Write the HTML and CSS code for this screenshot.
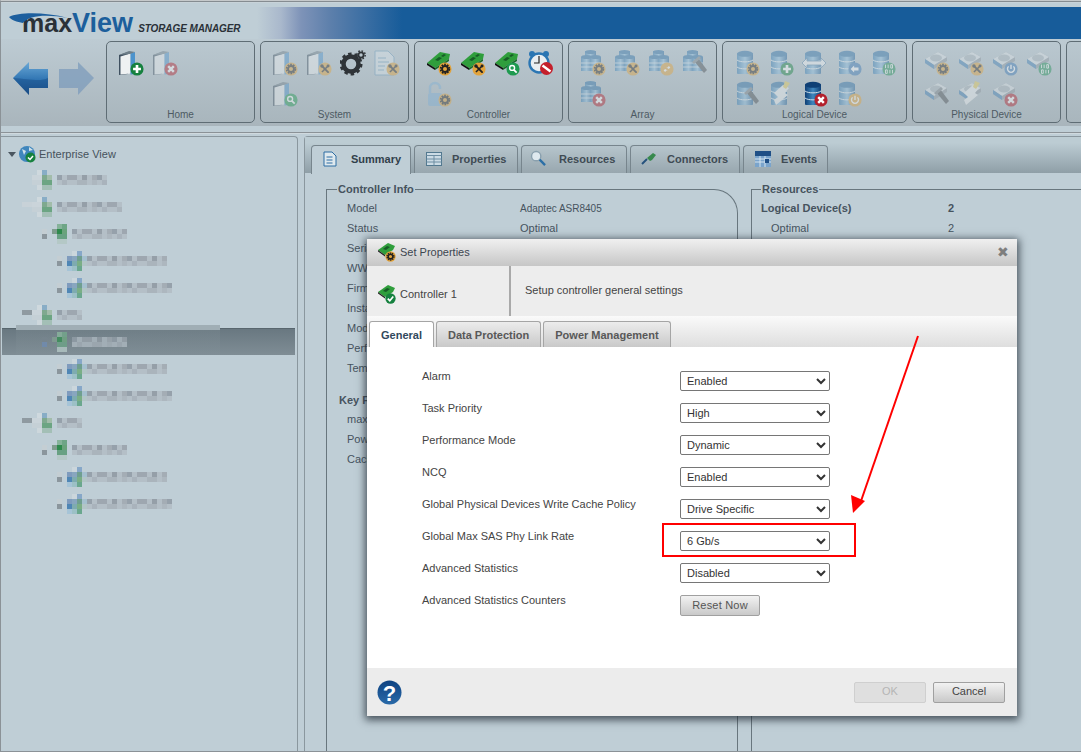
FILE: index.html
```html
<!DOCTYPE html>
<html lang="en">
<head>
<meta charset="utf-8">
<title>maxView Storage Manager</title>
<link rel="stylesheet" href="styles.css">
</head>
<body>
<svg class="defs" width="0" height="0" aria-hidden="true">
  <defs>
    <linearGradient id="gBlue" x1="0" y1="0" x2="0" y2="1"><stop offset="0" stop-color="#6aa8d6"/><stop offset=".55" stop-color="#2f74b2"/><stop offset="1" stop-color="#1b4f88"/></linearGradient>
    <linearGradient id="gDb" x1="0" y1="0" x2="1" y2="0"><stop offset="0" stop-color="#2f79b2"/><stop offset=".5" stop-color="#8ec0e2"/><stop offset="1" stop-color="#1d5f98"/></linearGradient>
    <linearGradient id="gDbDark" x1="0" y1="0" x2="1" y2="0"><stop offset="0" stop-color="#0e3f75"/><stop offset=".5" stop-color="#3f86bd"/><stop offset="1" stop-color="#0e3f75"/></linearGradient>
    <linearGradient id="gHelp" x1="0" y1="0" x2="0" y2="1"><stop offset="0" stop-color="#0f4382"/><stop offset="1" stop-color="#2a6aa8"/></linearGradient>
    <pattern id="mot" width="40" height="10" patternUnits="userSpaceOnUse">
      <rect width="40" height="10" fill="#b4bfc7"/>
      <rect width="5" height="5" fill="#96a1ab"/><rect x="10" width="10" height="5" fill="#9ea7b0"/><rect x="25" width="5" height="5" fill="#959fa8"/><rect x="35" width="5" height="5" fill="#a4adb5"/>
      <rect x="5" y="5" width="5" height="5" fill="#a9b3bc"/><rect x="20" y="5" width="10" height="5" fill="#aab4bc"/><rect x="35" y="5" width="5" height="5" fill="#adb7bf"/>
    </pattern>

    <symbol id="b-gear" viewBox="0 0 16 16"><circle cx="8" cy="8" r="7.500" fill="#e2a33b"/><circle cx="8" cy="8" r="5" fill="none" stroke="#222" stroke-width="2" stroke-dasharray="2 1.140"/><circle cx="8" cy="8" r="3.400" fill="none" stroke="#222" stroke-width="2.200"/></symbol>
    <symbol id="b-tool" viewBox="0 0 16 16"><circle cx="8" cy="8" r="7.500" fill="#e2a33b"/><path d="M5 5l6.500 6.500" stroke="#222" stroke-width="2.200" stroke-linecap="round"/><path d="M11.500 4.500l-7 7" stroke="#222" stroke-width="1.800"/><circle cx="4.500" cy="4.500" r="2" fill="#222"/><circle cx="11.500" cy="4.500" r="1.700" fill="#222"/></symbol>
    <symbol id="b-plus" viewBox="0 0 16 16"><circle cx="8" cy="8" r="7.500" fill="#16813f"/><path d="M8 3.500v9M3.500 8h9" stroke="#fff" stroke-width="3"/></symbol>
    <symbol id="b-x" viewBox="0 0 16 16"><circle cx="8" cy="8" r="7.500" fill="#b3202c"/><path d="M4.800 4.800l6.400 6.400M11.200 4.800l-6.400 6.400" stroke="#fff" stroke-width="2.800"/></symbol>
    <symbol id="b-find" viewBox="0 0 16 16"><circle cx="8" cy="8" r="7.500" fill="#1f9a50"/><circle cx="7" cy="6.800" r="2.800" fill="none" stroke="#fff" stroke-width="1.600"/><path d="M9 9l3.200 3.200" stroke="#fff" stroke-width="2"/></symbol>
    <symbol id="b-check" viewBox="0 0 16 16"><circle cx="8" cy="8" r="7.500" fill="#16813f"/><path d="M4 8.200l3 3 5-6" stroke="#fff" stroke-width="2.400" fill="none"/></symbol>
    <symbol id="b-link" viewBox="0 0 16 16"><circle cx="8" cy="8" r="7.500" fill="#e2a33b"/><path d="M5 10.500l1.600-1.600M9.400 7l1.600-1.600" stroke="#fff" stroke-width="2.400"/><path d="M6 8l2 2M8 6l2 2" stroke="#fff" stroke-width="1"/></symbol>
    <symbol id="b-back" viewBox="0 0 16 16"><circle cx="8" cy="8" r="7.500" fill="#3b78b5"/><path d="M3 8l4-4v2.400h5v3.200H7V12z" fill="#fff"/></symbol>
    <symbol id="b-bin" viewBox="0 0 16 16"><circle cx="8" cy="8" r="7.500" fill="#1f8f55"/><path d="M4 3v4M7 3v4M10 3h2v4h-2zM4 9h2v4H4zM9 9v4M12 9v4" stroke="#fff" stroke-width="1" fill="none"/></symbol>
    <symbol id="b-pow" viewBox="0 0 16 16"><circle cx="8" cy="8" r="7.500" fill="#3b78b5"/><path d="M5.200 5a4 4 0 1 0 5.600 0" fill="none" stroke="#fff" stroke-width="1.600"/><path d="M8 3v5" stroke="#fff" stroke-width="1.600"/></symbol>
    <symbol id="b-powo" viewBox="0 0 16 16"><circle cx="8" cy="8" r="7.500" fill="#e2a33b"/><path d="M5.200 5a4 4 0 1 0 5.600 0" fill="none" stroke="#fff" stroke-width="1.600"/><path d="M8 3v5" stroke="#fff" stroke-width="1.600"/></symbol>

    <symbol id="i-server" viewBox="0 0 26 26">
      <path d="M1 5l9-3v22l-9 1z" fill="#3f5060"/><path d="M2.500 6.500l10-3v20l-10 1z" fill="#eef1f2"/><path d="M12.500 3.500L17 2v22l-4.500 .5z" fill="#4c93cc"/><path d="M1 5l10-4 6 1-5 2z" fill="#6d7d88"/>
    </symbol>
    <symbol id="i-card" viewBox="0 0 26 26">
      <path d="M1 13L14 2l10 2-1 5L9 18z" fill="#2f9e3c"/><path d="M1 13l8 5v2l-8-5z" fill="#111"/><path d="M9 18L23 9v2L9 20z" fill="#1a6b2a"/><path d="M9 10l4-3 3 1-4 3zM15 6l3-2 2 1-3 2z" fill="#175c27"/>
    </symbol>
    <symbol id="i-hat" viewBox="0 0 20 20">
      <path d="M1 8l10-7 7 3-2 4-8 5z" fill="#2f9e3c"/><path d="M1 8l7 5v1.500L1 9.500z" fill="#222"/><path d="M6 7l4-3 3 1-4 3z" fill="#175c27"/>
    </symbol>
    <symbol id="i-db" viewBox="0 0 26 26">
      <rect x="3" y="3" width="16" height="21" rx="1" fill="url(#gDb)"/><ellipse cx="11" cy="3.800" rx="8" ry="3" fill="#2c6fa6"/><path d="M3 10c3 2.500 13 2.500 16 0M3 17c3 2.500 13 2.500 16 0" stroke="#eaf2f7" stroke-width="1" fill="none"/>
    </symbol>
    <symbol id="i-dbdark" viewBox="0 0 26 26">
      <rect x="3" y="3" width="16" height="21" rx="1" fill="url(#gDbDark)"/><ellipse cx="11" cy="3.800" rx="8" ry="3" fill="#0e3f75"/><path d="M3 10c3 2.500 13 2.500 16 0M3 17c3 2.500 13 2.500 16 0" stroke="#cfe0ec" stroke-width="1" fill="none"/>
    </symbol>
    <symbol id="i-arr" viewBox="0 0 26 26">
      <rect x="5" y="1" width="11" height="14" fill="url(#gDb)"/><rect x="1" y="7" width="11" height="14" fill="url(#gDb)"/><rect x="10" y="7" width="11" height="14" fill="url(#gDb)"/><ellipse cx="6.500" cy="7" rx="5.500" ry="2" fill="#2c6fa6"/><ellipse cx="15.500" cy="7" rx="5.500" ry="2" fill="#2c6fa6"/><ellipse cx="10.500" cy="2" rx="5.500" ry="2" fill="#2c6fa6"/><path d="M1 13h20M1 17h20" stroke="#eaf2f7" stroke-width=".8"/>
    </symbol>
    <symbol id="i-drive" viewBox="0 0 26 26">
      <path d="M1 9L14 2l9 5v4L10 19l-9-6z" fill="#8e98a0"/><path d="M1 9l9 6 13-8-9-5z" fill="#dfe5e8"/><ellipse cx="12" cy="8" rx="6" ry="3.400" fill="#a9b4bb"/><path d="M1 9v4l9 6v-4z" fill="#3f7fb5"/>
    </symbol>
    <symbol id="i-torch" viewBox="0 0 26 26"><path d="M12 11l4-3 9 12-3 3z" fill="#4a4f53"/><path d="M10 12l7-6 2 2-7 6z" fill="#7c8388"/></symbol>
    <symbol id="i-flash" viewBox="0 0 26 26"><path d="M6 12l9-8 6 3-4 5 3 2-12 10-2-5 4-3z" fill="#f3f5f6"/><path d="M17 0l5 2-4 6-3-2z" fill="#e9cf5b"/></symbol>
    <symbol id="i-wide" viewBox="0 0 26 26"><path d="M0 13l5-5v3h14V8l5 5-5 5v-3H5v3z" fill="#f3f6f8" stroke="#4d7ea6" stroke-width=".8"/></symbol>
    <symbol id="i-gears" viewBox="0 0 26 26">
      <circle cx="11" cy="14" r="7.500" fill="none" stroke="#2f3438" stroke-width="4.500"/><circle cx="11" cy="14" r="10" fill="none" stroke="#2f3438" stroke-width="3" stroke-dasharray="3.400 2.880"/>
      <circle cx="21" cy="5" r="2.600" fill="none" stroke="#2f3438" stroke-width="1.800"/><circle cx="21" cy="5" r="4.200" fill="none" stroke="#2f3438" stroke-width="1.400" stroke-dasharray="1.600 1.700"/>
    </symbol>
    <symbol id="i-doc" viewBox="0 0 26 26">
      <path d="M1 1h13l6 6v18H1z" fill="#dbe5ea" stroke="#6f9dbd"/><path d="M4 8h8M4 12h11M4 16h7M4 20h6" stroke="#6f9dbd"/>
    </symbol>
    <symbol id="i-clock" viewBox="0 0 26 26">
      <circle cx="4" cy="4" r="3" fill="#2b76b3"/><circle cx="18" cy="4" r="3" fill="#2b76b3"/><circle cx="11" cy="13" r="9.500" fill="#e9eef1" stroke="#2b76b3" stroke-width="2.400"/><path d="M11 6v7H6" stroke="#222" stroke-width="1.200" fill="none"/>
      <circle cx="18.500" cy="18.500" r="6.500" fill="#c41f2b"/><path d="M14.500 15.500l8 6" stroke="#fff" stroke-width="2.400"/>
    </symbol>
    <symbol id="i-lock" viewBox="0 0 26 26">
      <path d="M4 12V7a5 5 0 0 1 10 0v1" fill="none" stroke="#7fb0d6" stroke-width="2.400"/><rect x="2" y="12" width="14" height="13" rx="2" fill="#7fb0d6"/>
    </symbol>
    <symbol id="i-glass" viewBox="0 0 22 22">
      <circle cx="8" cy="8" r="6" fill="#dfe9ef" stroke="#8aa0ae" stroke-width="1.800"/><path d="M12.500 12.500l7 7" stroke="#2c6fa6" stroke-width="3"/>
    </symbol>

    <symbol id="m-node" viewBox="0 0 20 20">
      <rect x="5" y="0" width="5" height="5" fill="#cfd9de"/><rect x="10" y="0" width="5" height="5" fill="#88adc6"/>
      <rect y="5" width="10" height="5" fill="#cad4da"/><rect x="10" y="5" width="5" height="5" fill="#7fa98f"/><rect x="15" y="5" width="5" height="5" fill="#a2bcaa"/>
      <rect y="10" width="10" height="5" fill="#c5d0d6"/><rect x="10" y="10" width="10" height="5" fill="#6ca583"/>
      <rect x="5" y="15" width="5" height="5" fill="#cdd7dc"/><rect x="10" y="15" width="10" height="5" fill="#a3bfb6"/>
    </symbol>
    <symbol id="m-ctrl" viewBox="0 0 20 20">
      <rect x="5" y="0" width="5" height="5" fill="#86b39a"/><rect x="10" y="0" width="5" height="5" fill="#6ea586"/>
      <rect y="5" width="5" height="5" fill="#7f9c8e"/><rect x="5" y="5" width="5" height="5" fill="#2e8a4d"/><rect x="10" y="5" width="5" height="5" fill="#6aa37c"/>
      <rect x="5" y="10" width="10" height="5" fill="#68a183"/>
      <rect x="5" y="15" width="10" height="5" fill="#b4c8c6"/>
    </symbol>
    <symbol id="m-vol" viewBox="0 0 20 20">
      <rect x="5" y="0" width="5" height="5" fill="#cbd6dc"/><rect x="10" y="0" width="5" height="5" fill="#86a7c8"/>
      <rect y="5" width="5" height="5" fill="#7f9bbd"/><rect x="5" y="5" width="5" height="5" fill="#88a6bf"/><rect x="10" y="5" width="5" height="5" fill="#6f9e90"/><rect x="15" y="5" width="5" height="5" fill="#a5c0cf"/>
      <rect y="10" width="5" height="5" fill="#4f86b5"/><rect x="5" y="10" width="5" height="5" fill="#7eabb0"/><rect x="10" y="10" width="5" height="5" fill="#7aae86"/><rect x="15" y="10" width="5" height="5" fill="#b2c5c7"/>
      <rect y="15" width="5" height="5" fill="#a6c4d7"/><rect x="5" y="15" width="5" height="5" fill="#9cc0c6"/><rect x="10" y="15" width="5" height="5" fill="#6aa78e"/>
    </symbol>
    <symbol id="m-exp" viewBox="0 0 5 10"><rect y="0" width="5" height="5" fill="#c4ced3"/><rect y="5" width="5" height="5" fill="#8b969d"/></symbol>
    <symbol id="m-exps" viewBox="0 0 5 10"><rect y="0" width="5" height="5" fill="#72808a"/><rect y="5" width="5" height="5" fill="#6b88b0"/></symbol>
  </defs>
</svg>

<div class="app">
  <header class="masthead">
    <div class="logo">
      <svg class="swoosh" width="60" height="12" viewBox="0 0 60 12"><path d="M0 4C10 -1 36 -1 59 5 38 1 20 2 14 10 8 9 2 7 0 4z" fill="#1d5f9e"/></svg>
      <span class="logo-max">max</span><span class="logo-view">View</span>
      <span class="logo-sub">STORAGE MANAGER</span>
    </div>
    <div class="bluebar"></div>
  </header>

  <nav class="toolbar">
    <div class="nav-arrows">
      <svg width="37" height="35" viewBox="0 0 37 35"><path d="M1 17L17 1v7h19v19H17v7z" fill="url(#gBlue)"/><path d="M17 34v-7h19V17c-8 4-18 1-35 0z" fill="#174a82" opacity=".45"/></svg>
      <svg class="dim" width="37" height="35" viewBox="0 0 37 35"><path d="M36 17L20 1v7H1v19h19v7z" fill="#7d9cbc"/></svg>
    </div>

    <section class="group g-w149">
      <div class="icons">
        <div class="ic"><svg><use href="#i-server"/></svg><svg class="bd"><use href="#b-plus"/></svg></div>
        <div class="ic off"><svg><use href="#i-server"/></svg><svg class="bd"><use href="#b-x"/></svg></div>
      </div>
      <div class="gname">Home</div>
    </section>

    <section class="group g-w149">
      <div class="icons">
        <div class="ic off"><svg><use href="#i-server"/></svg><svg class="bd"><use href="#b-gear"/></svg></div>
        <div class="ic off"><svg><use href="#i-server"/></svg><svg class="bd"><use href="#b-tool"/></svg></div>
        <div class="ic"><svg><use href="#i-gears"/></svg></div>
        <div class="ic off"><svg><use href="#i-doc"/></svg><svg class="bd"><use href="#b-tool"/></svg></div>
        <div class="ic off"><svg><use href="#i-server"/></svg><svg class="bd"><use href="#b-find"/></svg></div>
      </div>
      <div class="gname">System</div>
    </section>

    <section class="group g-w149">
      <div class="icons">
        <div class="ic"><svg><use href="#i-card"/></svg><svg class="bd"><use href="#b-gear"/></svg></div>
        <div class="ic"><svg><use href="#i-card"/></svg><svg class="bd"><use href="#b-tool"/></svg></div>
        <div class="ic"><svg><use href="#i-card"/></svg><svg class="bd"><use href="#b-find"/></svg></div>
        <div class="ic"><svg><use href="#i-clock"/></svg></div>
        <div class="ic off"><svg><use href="#i-lock"/></svg><svg class="bd"><use href="#b-gear"/></svg></div>
      </div>
      <div class="gname">Controller</div>
    </section>

    <section class="group g-w149">
      <div class="icons">
        <div class="ic off"><svg><use href="#i-arr"/></svg><svg class="bd"><use href="#b-gear"/></svg></div>
        <div class="ic off"><svg><use href="#i-arr"/></svg><svg class="bd"><use href="#b-tool"/></svg></div>
        <div class="ic off"><svg><use href="#i-arr"/></svg><svg class="bd"><use href="#b-link"/></svg></div>
        <div class="ic off"><svg><use href="#i-arr"/></svg><svg class="full"><use href="#i-torch"/></svg></div>
        <div class="ic off"><svg><use href="#i-arr"/></svg><svg class="bd"><use href="#b-x"/></svg></div>
      </div>
      <div class="gname">Array</div>
    </section>

    <section class="group g-w185">
      <div class="icons">
        <div class="ic off"><svg><use href="#i-db"/></svg><svg class="bd"><use href="#b-gear"/></svg></div>
        <div class="ic off"><svg><use href="#i-db"/></svg><svg class="bd"><use href="#b-plus"/></svg></div>
        <div class="ic off"><svg><use href="#i-db"/></svg><svg class="full"><use href="#i-wide"/></svg></div>
        <div class="ic off"><svg><use href="#i-db"/></svg><svg class="bd"><use href="#b-back"/></svg></div>
        <div class="ic off"><svg><use href="#i-db"/></svg><svg class="bd"><use href="#b-bin"/></svg></div>
        <div class="ic off"><svg><use href="#i-db"/></svg><svg class="full"><use href="#i-torch"/></svg></div>
        <div class="ic off"><svg><use href="#i-db"/></svg><svg class="full"><use href="#i-flash"/></svg></div>
        <div class="ic"><svg><use href="#i-dbdark"/></svg><svg class="bd"><use href="#b-x"/></svg></div>
        <div class="ic off"><svg><use href="#i-db"/></svg><svg class="bd"><use href="#b-powo"/></svg></div>
      </div>
      <div class="gname">Logical Device</div>
    </section>

    <section class="group g-w149">
      <div class="icons">
        <div class="ic off"><svg><use href="#i-drive"/></svg><svg class="bd"><use href="#b-gear"/></svg></div>
        <div class="ic off"><svg><use href="#i-drive"/></svg><svg class="bd"><use href="#b-tool"/></svg></div>
        <div class="ic off"><svg><use href="#i-drive"/></svg><svg class="bd"><use href="#b-pow"/></svg></div>
        <div class="ic off"><svg><use href="#i-drive"/></svg><svg class="bd"><use href="#b-bin"/></svg></div>
        <div class="ic off"><svg><use href="#i-drive"/></svg><svg class="full"><use href="#i-torch"/></svg></div>
        <div class="ic off"><svg><use href="#i-drive"/></svg><svg class="full"><use href="#i-flash"/></svg></div>
        <div class="ic off"><svg><use href="#i-drive"/></svg><svg class="bd"><use href="#b-x"/></svg></div>
      </div>
      <div class="gname">Physical Device</div>
    </section>

    <section class="group g-rest"></section>
  </nav>

  <main class="workspace">
    <aside class="tree">
      <div class="root">
        <span class="caret"></span>
        <svg class="globe" width="17" height="17" viewBox="0 0 17 17"><circle cx="8" cy="8" r="8" fill="#3f86bd"/><path d="M3 3l4 2-2 4zM10 1l4 3-4 1z" fill="#cfe1ea"/><circle cx="11.500" cy="11.500" r="5" fill="#16813f"/><path d="M9 11.500l2 2 3-3.500" stroke="#fff" stroke-width="1.500" fill="none"/></svg>
        <span>Enterprise View</span>
      </div>
      <div class="trow l1"><svg class="mi" width="20" height="20"><use href="#m-node"/></svg><svg class="mt" width="50" height="10"><rect width="50" height="10" fill="url(#mot)"/></svg></div>
      <div class="trow l0"><svg class="mi" width="30" height="20" viewBox="0 0 30 20"><rect y="5" width="10" height="5" fill="#c8d2d8"/><use href="#m-node" x="10" width="20" height="20"/></svg><svg class="mt" width="65" height="10"><rect width="65" height="10" fill="url(#mot)"/></svg></div>
      <div class="trow l2"><svg class="me" width="5" height="10"><use href="#m-exp"/></svg><svg class="mi" width="20" height="20"><use href="#m-ctrl"/></svg><svg class="mt" width="55" height="10"><rect width="55" height="10" fill="url(#mot)"/></svg></div>
      <div class="trow l3"><svg class="me" width="5" height="10"><use href="#m-exp"/></svg><svg class="mi" width="20" height="20"><use href="#m-vol"/></svg><svg class="mt" width="80" height="10"><rect width="80" height="10" fill="url(#mot)"/></svg></div>
      <div class="trow l3"><svg class="me" width="5" height="10"><use href="#m-exp"/></svg><svg class="mi" width="20" height="20"><use href="#m-vol"/></svg><svg class="mt" width="85" height="10"><rect width="85" height="10" fill="url(#mot)"/></svg></div>
      <div class="trow l0"><svg class="mi" width="30" height="20" viewBox="0 0 30 20"><rect y="5" width="10" height="5" fill="#8f9aa1"/><use href="#m-node" x="10" width="20" height="20"/></svg><svg class="mt" width="25" height="10"><rect width="25" height="10" fill="url(#mot)"/></svg></div>
      <div class="trow l2 selected"><svg class="me" width="5" height="10"><use href="#m-exps"/></svg><svg class="mi" width="20" height="20"><use href="#m-ctrl"/></svg><svg class="mt" width="55" height="10"><rect width="55" height="10" fill="url(#mot)"/></svg></div>
      <div class="trow l3"><svg class="me" width="5" height="10"><use href="#m-exp"/></svg><svg class="mi" width="20" height="20"><use href="#m-vol"/></svg><svg class="mt" width="80" height="10"><rect width="80" height="10" fill="url(#mot)"/></svg></div>
      <div class="trow l3"><svg class="me" width="5" height="10"><use href="#m-exp"/></svg><svg class="mi" width="20" height="20"><use href="#m-vol"/></svg><svg class="mt" width="85" height="10"><rect width="85" height="10" fill="url(#mot)"/></svg></div>
      <div class="trow l0"><svg class="mi" width="30" height="20" viewBox="0 0 30 20"><rect y="5" width="10" height="5" fill="#8f9aa1"/><use href="#m-node" x="10" width="20" height="20"/></svg><svg class="mt" width="25" height="10"><rect width="25" height="10" fill="url(#mot)"/></svg></div>
      <div class="trow l2"><svg class="me" width="5" height="10"><use href="#m-exp"/></svg><svg class="mi" width="20" height="20"><use href="#m-ctrl"/></svg><svg class="mt" width="55" height="10"><rect width="55" height="10" fill="url(#mot)"/></svg></div>
      <div class="trow l3"><svg class="me" width="5" height="10"><use href="#m-exp"/></svg><svg class="mi" width="20" height="20"><use href="#m-vol"/></svg><svg class="mt" width="80" height="10"><rect width="80" height="10" fill="url(#mot)"/></svg></div>
      <div class="trow l3"><svg class="me" width="5" height="10"><use href="#m-exp"/></svg><svg class="mi" width="20" height="20"><use href="#m-vol"/></svg><svg class="mt" width="85" height="10"><rect width="85" height="10" fill="url(#mot)"/></svg></div>
    </aside>

    <section class="detail">
      <div class="dtabs">
        <div class="dtab active w100"><svg width="14" height="16" viewBox="0 0 14 16"><path d="M1 1h8l4 4v10H1z" fill="#dfe9ee" stroke="#2d6da3"/><path d="M3.500 6h6M3.500 9h6M3.500 12h6" stroke="#2d6da3"/></svg>Summary</div>
        <div class="dtab w104"><svg width="16" height="14" viewBox="0 0 16 14"><rect x=".5" y=".5" width="15" height="13" fill="#cbdbe5" stroke="#52788f"/><path d="M.5 3.500h15M8 3.500v10M.5 7h15M.5 10h15" stroke="#6d8da2"/></svg>Properties</div>
        <div class="dtab w106 tight"><svg width="17" height="17"><use href="#i-glass"/></svg>Resources</div>
        <div class="dtab w110 conn"><svg width="16" height="14" viewBox="0 0 16 14"><path d="M6 6l6-5 3 2-4 5-2 1z" fill="#37894d"/><path d="M1 12l5-5" stroke="#26527d" stroke-width="2"/></svg>Connectors</div>
        <div class="dtab w85"><svg width="16" height="16" viewBox="0 0 16 16"><rect y="1" width="16" height="15" fill="#7aa4cc"/><rect y="0" width="16" height="5" fill="#1f4f86"/><path d="M0 8h16M0 11h16M5 5v11M10 5v11" stroke="#d4e3ee"/><rect x="10" y="8" width="4" height="4" fill="#1f4f86"/></svg>Events</div>
      </div>
      <div class="dbody">
        <fieldset class="fs fs-info">
          <legend>Controller Info</legend>
          <div class="kv"><span>Model</span><span class="small">Adaptec ASR8405</span></div>
          <div class="kv"><span>Status</span><span>Optimal</span></div>
          <div class="kv"><span>Serial</span></div>
          <div class="kv"><span>WWN</span></div>
          <div class="kv"><span>Firmware</span></div>
          <div class="kv"><span>Installed</span></div>
          <div class="kv"><span>Mode</span></div>
          <div class="kv"><span>Performance</span></div>
          <div class="kv"><span>Temperature</span></div>
          <div class="kh">Key Features</div>
          <div class="kv"><span>maxCache</span></div>
          <div class="kv"><span>Power</span></div>
          <div class="kv"><span>Cache</span></div>
        </fieldset>
        <fieldset class="fs fs-res">
          <legend>Resources</legend>
          <div class="rv strong"><span>Logical Device(s)</span><span>2</span></div>
          <div class="rv sub"><span>Optimal</span><span>2</span></div>
        </fieldset>
      </div>
    </section>
  </main>
</div>

<div class="modal">
  <div class="m-title">
    <span class="m-ico"><svg><use href="#i-hat"/></svg><svg class="bd"><use href="#b-gear"/></svg></span>
    <span>Set Properties</span>
    <span class="m-close">✖</span>
  </div>
  <div class="m-head">
    <div class="m-target">
      <span class="m-ico"><svg><use href="#i-hat"/></svg><svg class="bd"><use href="#b-check"/></svg></span>
      <span>Controller 1</span>
    </div>
    <div class="m-desc">Setup controller general settings</div>
  </div>
  <div class="m-tabs">
    <div class="m-tab active">General</div>
    <div class="m-tab">Data Protection</div>
    <div class="m-tab">Power Management</div>
  </div>
  <form class="m-form">
    <label>Alarm</label><select><option>Enabled</option></select>
    <label>Task Priority</label><select><option>High</option></select>
    <label>Performance Mode</label><select><option>Dynamic</option></select>
    <label>NCQ</label><select><option>Enabled</option></select>
    <label>Global Physical Devices Write Cache Policy</label><select><option>Drive Specific</option></select>
    <label>Global Max SAS Phy Link Rate</label><select><option>6 Gb/s</option></select>
    <label>Advanced Statistics</label><select><option>Disabled</option></select>
    <label>Advanced Statistics Counters</label><button type="button" class="btn reset">Reset Now</button>
  </form>
  <div class="m-foot">
    <svg width="25" height="25" viewBox="0 0 25 25"><ellipse cx="12.500" cy="12.500" rx="12" ry="12" fill="url(#gHelp)"/><text x="12.500" y="20.500" text-anchor="middle" class="qm">?</text></svg>
    <div class="m-actions">
      <button type="button" class="btn ok" disabled>OK</button>
      <button type="button" class="btn cancel">Cancel</button>
    </div>
  </div>
</div>

<div class="callout-box"></div>
<svg class="callout-arrow" width="80" height="180" viewBox="0 0 80 180"><path d="M68 1L11 166" stroke="#f00" stroke-width="2" fill="none"/><path d="M1 160l14 6-12 12z" fill="#f00"/></svg>
</body>
</html>
```
FILE: styles.css
```css
* { box-sizing: border-box; }
html, body { margin: 0; height: 752px; overflow: hidden; }
body { font-family: "Liberation Sans", Arial, sans-serif; font-size: 11px; color: #46535e; background: #bfced6; position: relative; }
.defs { position: absolute; }

.app { height: 752px; display: flex; flex-direction: column; border-left: 1px solid #8b9297; border-top: 1px solid #c5c9cb; border-bottom: 1px solid #8b9297; overflow: hidden; }

.masthead { height: 38px; flex: none; display: flex; border-top: 1px solid #858c91; padding-top: 5px; background: #bfced6; box-shadow: inset 0 1px 0 #c8d3d9; }
.logo { width: 256px; flex: none; position: relative; padding: 3px 0 0 21px; line-height: 26px; white-space: nowrap; }
.swoosh { position: absolute; left: 8px; top: 6px; }
.logo-max { font-size: 25px; font-weight: 700; color: #2a3138; }
.logo-view { font-size: 27px; font-weight: 700; color: #1c5f9c; }
.logo-sub { font-size: 10px; font-weight: 700; font-style: italic; color: #2a3138; margin-left: 2px; letter-spacing: -.1px; }
.bluebar { flex: 1; background: linear-gradient(90deg, #bfced6 0, #a9b8cc 24px, #7e93b8 44px, #5c7fab 74px, #175c9a 145px); }

.toolbar { height: 94px; flex: none; display: flex; gap: 5px; padding: 2px 0 0 3px; background: linear-gradient(#bdcbd3, #a9b5bc 87px, #bfced6 87px); border-bottom: 1px solid #8b9297; }
.nav-arrows { width: 97px; flex: none; display: flex; gap: 9px; padding: 20px 0 0 8px; }
.dim { opacity: .75; }
.group { flex: none; height: 82px; border: 1px solid #5f6d75; border-radius: 5px; display: flex; flex-direction: column; padding: 8px 0 0 11px; background: linear-gradient(#b9c7cf, #a9b6bd); }
.g-w149 { width: 149px; }
.g-w185 { width: 185px; }
.g-rest { flex: 1; min-width: 0; border-right: 0; border-radius: 5px 0 0 5px; }
.icons { flex: 1; display: flex; flex-wrap: wrap; align-content: flex-start; gap: 5px 8px; }
.ic { width: 26px; height: 26px; position: relative; }
.ic svg { display: block; width: 26px; height: 26px; }
.ic svg.bd { position: absolute; right: 0; bottom: 0; width: 14px; height: 14px; }
.ic svg.full { position: absolute; inset: 0; }
.ic.off { opacity: .42; }
.gname { text-align: center; font-size: 10px; line-height: 12px; height: 13px; margin-left: -11px; color: #4d5a63; }

.workspace { flex: 1; display: flex; gap: 6px; padding-top: 3px; box-shadow: inset 0 1px 0 #cfd9de; min-height: 0; background: #bfced6; }
.tree { width: 297px; flex: none; border: 1px solid #8a979e; border-left: 0; border-bottom: 0; border-radius: 0 4px 0 0; padding-top: 8px; }
.root { display: flex; align-items: center; height: 18px; padding-left: 7px; color: #46525c; }
.caret { width: 0; height: 0; border: 4px solid transparent; border-top: 5px solid #4a5660; border-bottom: 0; margin-right: 3px; }
.globe { margin-right: 3px; }
.trow { height: 27px; display: flex; align-items: center; }
.trow svg { display: block; flex: none; }
.root + .trow { margin-top: 3px; }
.l0 { padding-left: 21px; gap: 5px; }
.l1 { padding-left: 31px; gap: 5px; }
.l2 { padding-left: 41px; }
.l3 { padding-left: 56px; }
.me { margin-right: 5px; }
.selected { background: linear-gradient(#687780, #7f8d95); box-shadow: inset 0 1px 0 #58666e; margin: 0 2px 0 1px; padding-left: 40px; position: relative; }
.selected::before { content: ""; position: absolute; left: 14px; top: -3px; width: 204px; height: 30px; background: linear-gradient(#a0aeb5 5px, rgba(130,145,152,.25) 5px); }
.selected .mt { opacity: .7; }

.detail { flex: 1; border: 1px solid #8a979e; border-right: 0; border-bottom: 0; border-radius: 4px 0 0 0; min-width: 0; display: flex; flex-direction: column; }
.dtabs { height: 36px; flex: none; display: flex; gap: 3px; padding: 8px 0 0 6px; background: linear-gradient(#bcccd3 0, #bcccd3 6px, #8f9fa7); align-items: flex-end; }
.dtab { height: 28px; border: 1px solid #77858d; border-bottom: 0; border-radius: 4px 4px 0 0; display: flex; align-items: center; gap: 10px; padding: 0 0 2px 11px; font-weight: 700; font-size: 11px; color: #3f4b54; background: linear-gradient(#b6c5cc, #98a7af); }
.dtab svg { flex: none; }
.dtab.active { background: #bfced6; height: 29px; margin-bottom: -1px; position: relative; color: #31404b; gap: 14px; padding: 0 0 3px 11px; }
.dtab.tight { padding-left: 8px; gap: 12px; }
.dtab.conn { padding-left: 10px; }
.w100 { width: 100px; }
.w104 { width: 104px; }
.w106 { width: 106px; }
.w110 { width: 110px; }
.w85 { width: 85px; }
.dbody { flex: 1; display: flex; gap: 13px; padding: 9px 0 0 21px; min-height: 0; }
.fs { margin: 0; padding: 2px 0 0 20px; border: 1px solid #68767e; border-bottom: 0; min-width: 0; }
.fs legend { padding: 0 1px; margin-left: -10px; font-weight: 700; font-size: 11px; color: #46535e; line-height: 14px; }
.fs-info { width: 412px; flex: none; border-radius: 0 24px 0 0; }
.fs-res { flex: 1; border-right: 0; padding-left: 9px; }
.fs-res legend { margin-left: 0; }
.kv { height: 20px; display: grid; grid-template-columns: 173px 1fr; align-items: center; }
.small { font-size: 10px; }
.kh { font-weight: 700; height: 19px; line-height: 20px; margin: 12px 0 0 -8px; }
.rv { height: 20px; display: grid; grid-template-columns: 187px 1fr; align-items: center; }
.rv.strong { font-weight: 700; }
.rv.sub { padding-left: 10px; grid-template-columns: 177px 1fr; }

.modal { position: absolute; left: 367px; top: 239px; width: 650px; height: 477px; background: #fff; display: flex; flex-direction: column; box-shadow: 0 2px 8px 2px rgba(30,40,50,.75); }
.m-title { height: 27px; flex: none; display: flex; align-items: center; padding: 0 0 2px 10px; gap: 3px; background: linear-gradient(#f0f0f0, #c6c6c6); color: #3d4650; }
.m-ico { width: 20px; height: 20px; position: relative; flex: none; }
.m-ico svg { width: 20px; height: 20px; display: block; }
.m-ico svg.bd { position: absolute; right: 1px; bottom: 0; width: 11px; height: 11px; }
.m-close { margin-left: auto; margin-right: 8px; font-size: 14px; color: #7e7e7e; }
.m-head { height: 50px; flex: none; display: flex; background: #ededed; }
.m-target { width: 144px; flex: none; display: flex; align-items: center; gap: 3px; padding: 6px 0 0 10px; border-right: 2px solid #a9a9a9; color: #444; }
.m-desc { padding: 18px 0 0 14px; color: #444; }
.m-tabs { height: 31px; flex: none; display: flex; gap: 2px; padding: 5px 0 0 2px; background: linear-gradient(#fafafa, #dedede); align-items: flex-end; }
.m-tab { height: 26px; line-height: 26px; padding: 0 11px; border: 1px solid #a5a5a5; border-bottom: 0; border-radius: 3px 3px 0 0; background: linear-gradient(#ececec, #c9c9c9); color: #585858; font-size: 11px; font-weight: 700; }
.m-tab.active { background: #fff; color: #30485c; }
.m-form { flex: 1; display: grid; grid-template-columns: 258px 150px; grid-auto-rows: 32px; padding: 24px 0 0 55px; align-content: start; }
.m-form label { color: #444; line-height: 12px; margin-top: -1px; }
.m-form select { height: 20px; width: 150px; background: #fff; border: 1px solid #767676; border-radius: 2px; font-family: "Liberation Sans", Arial, sans-serif; font-size: 11px; color: #333; padding-left: 2px; }
.m-foot { height: 48px; flex: none; background: #ececec; display: flex; align-items: center; justify-content: space-between; padding: 0 12px 0 10px; }
.qm { font-size: 22px; font-weight: 700; fill: #fff; font-family: "Liberation Sans", Arial, sans-serif; }
.m-actions { display: flex; gap: 7px; }
.btn { width: 72px; height: 21px; border: 1px solid #a0a0a0; border-radius: 2px; background: linear-gradient(#f2f2f2, #c9c9c9); color: #444; font-family: "Liberation Sans", Arial, sans-serif; font-size: 11px; padding: 0 0 2px; }
.btn.ok { background: #dfdfdf; border-color: #cfcfcf; color: #b5b5b5; }
.btn.reset { width: 80px; color: #555; letter-spacing: .2px; }

.callout-box { position: absolute; left: 662px; top: 523px; width: 194px; height: 34px; border: 2px solid #f00; }
.callout-arrow { position: absolute; left: 850px; top: 335px; }
```
